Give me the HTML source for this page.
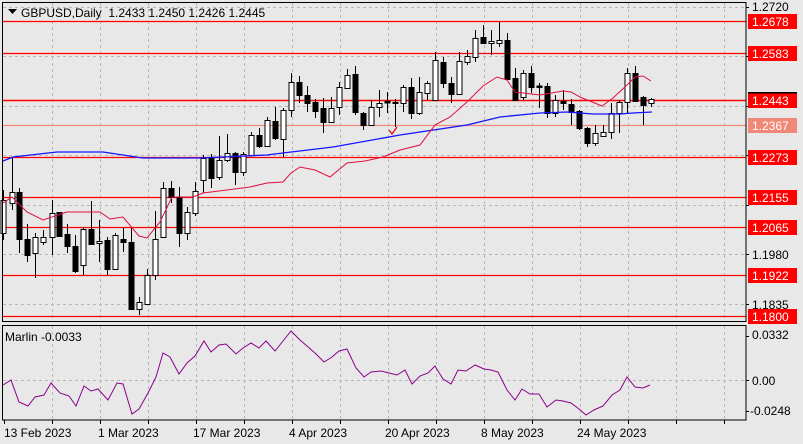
<!DOCTYPE html>
<html><head><meta charset="utf-8"><style>
html,body{margin:0;padding:0;background:#e8e8e8;width:803px;height:444px;overflow:hidden}
svg{display:block;font-family:"Liberation Sans",sans-serif}
</style></head><body>
<svg id="s" width="803" height="444" viewBox="0 0 803 444" xmlns="http://www.w3.org/2000/svg">
<rect x="0" y="0" width="803" height="444" fill="#e8e8e8"/>
<g id="grid" stroke="#b8b8b8" stroke-dasharray="3,3" stroke-width="1"></g>
<g id="hl"></g>
<g id="cand"></g>
<polyline id="blue" fill="none" stroke="#1414ff" stroke-width="1.3"/>
<polyline id="red" fill="none" stroke="#e01040" stroke-width="1"/>
<path d="M389,130 L392,134 L397,127" fill="none" stroke="#e01010" stroke-width="1.3"/>
<polyline id="marlin" fill="none" stroke="#8b008b" stroke-width="1"/>
<rect x="2.5" y="2.5" width="743.5" height="319" fill="none" stroke="#000" stroke-width="1"/>
<rect x="2.5" y="325.5" width="743.5" height="94.5" fill="none" stroke="#000" stroke-width="1"/>
<g font-size="12" fill="#000">
<path d="M8,9 L17,9 L12.5,14 Z" fill="#000"/>
<text x="21" y="17">GBPUSD,Daily&#160; 1.2433 1.2450 1.2426 1.2445</text>
<text x="5" y="341">Marlin -0.0033</text>
</g>
<g font-size="12" fill="#000" id="axis">
<text x="752" y="11">1.2720</text>
<text x="752" y="259">1.1980</text>
<text x="752" y="309">1.1835</text>
<text x="752" y="339">0.0332</text>
<text x="752" y="385">0.00</text>
<text x="750" y="415">-0.0248</text>
</g>
<g id="lbl" font-size="12" fill="#fff"></g>
<g font-size="12" fill="#000">
<text x="4" y="437">13 Feb 2023</text>
<text x="98" y="437">1 Mar 2023</text>
<text x="193" y="437">17 Mar 2023</text>
<text x="289" y="437">4 Apr 2023</text>
<text x="385" y="437">20 Apr 2023</text>
<text x="481" y="437">8 May 2023</text>
<text x="577" y="437">24 May 2023</text>
</g>
</svg>
<script>
var NS="http://www.w3.org/2000/svg";
function el(p,t,a){var e=document.createElementNS(NS,t);for(var k in a)e.setAttribute(k,a[k]);p.appendChild(e);return e;}
var g=document.getElementById('grid');
for(var x=52;x<746;x+=48){el(g,'line',{x1:x+.5,y1:3,x2:x+.5,y2:321});el(g,'line',{x1:x+.5,y1:326,x2:x+.5,y2:419});}
[7,56,106,155,205,254,304].forEach(function(y){el(g,'line',{x1:3,y1:y+.5,x2:745,y2:y+.5});});
el(g,'line',{x1:3,y1:380.5,x2:745,y2:380.5});
var ax=document.getElementById('axis');
[7,56,106,155,205,254,304,336,380,411].forEach(function(y){el(ax,'line',{x1:746,y1:y+.5,x2:749,y2:y+.5,stroke:'#000'});});
[4,52,100,148,196,244,292,340,388,436,484,532,580,628,676,724].forEach(function(x){el(ax,'line',{x1:x+.5,y1:420,x2:x+.5,y2:424,stroke:'#000'});});
var hl=document.getElementById('hl'),lb=document.getElementById('lbl');
[[21,'1.2678','#f00'],[53,'1.2583','#f00'],[100,'1.2443','#f00'],[125,'1.2367','#f08878'],[157,'1.2273','#f00'],[197,'1.2155','#f00'],[227,'1.2065','#f00'],[275,'1.1922','#f00'],[316,'1.1800','#f00']].forEach(function(r){
el(hl,'line',{x1:3,y1:r[0]+.5,x2:746,y2:r[0]+.5,stroke:r[2],'stroke-width':r[0]==100?1.6:1.2});
el(lb,'rect',{x:748,y:r[0]-7,width:49,height:15,fill:r[2]});
var t=el(lb,'text',{x:752,y:r[0]+5});t.textContent=r[1];});
el(lb,'rect',{x:748,y:92,width:49,height:1.5,fill:'#000'});
var C=[[3,190,240,200,233,1],[11.7,158,210,192,203,1],[19.3,188,253,192,239,0],[27.3,224,262,239,255,0],[35.3,233,278,237,253,1],[43.3,230,245,237,242,1],[51.7,200,255,213,237,1],[59.3,212,237,212,236,0],[67.3,224,253,234,246,0],[75.3,235,273,246,271,0],[83.3,227,275,229,265,1],[91.3,201,245,229,244,0],[99.3,220,262,241,243,1],[107.3,237,275,240,269,0],[115.3,233,269,235,269,1],[123.3,228,252,239,242,0],[131.3,228,310,242,309,0],[139.3,297,315,302,309,1],[147.3,269,304,275,304,1],[155.3,211,280,239,275,1],[163.3,182,237,188,237,1],[171.3,181,203,188,197,0],[179.3,187,247,197,233,0],[187.3,207,240,212,233,1],[195.3,182,216,191,213,1],
[203,155,193,158,180,1],[211,154,188,158,178,0],[219,136,180,160,177,1],[227,134,162,153,160,1],[235,152,185,153,172,0],[243,152,176,154,172,1],[251,132,155,135,155,1],[259,128,148,135,146,0],[267,117,147,120,146,1],[275,107,140,121,138,0],[283,108,157,110,139,1],[291,73,117,82,110,1],[299,76,103,82,95,0],[307,86,112,95,103,0],[315,99,118,102,111,0],[323,98,133,108,122,0],[331,97,123,108,122,1],[339,82,115,87,107,1],[347,69,88,75,88,1],[355,66,115,74,112,0],[363,112,130,113,125,0],[371,100,125,107,125,1],[379,90,117,103,107,1],[387,92,113,101,102.5,0],[395,99,127,102,103,0],
[403,85,112,87,103,1],[411,78,119,87,113,0],[419,77,115,92,113,1],[427,81,100,83,93,1],[435,52,100,60,100,1],[443,57,88,62,83,0],[451,77,103,83,94,0],[459,52,94,61,94,1],[467,50,65,56,62,1],[475,30,62,38,57,1],[483,25,44,37,43,0],[491,30,55,41,43,1],[499,22,47,40,43,1],[507,33,80,40,79,0],[515,68,100,78,100,0],[523,70,100,73,97,1],[531,66,93,73,87,0],[539,83,108,85.5,87,0],[547,83,118,86,113,0],[555,95,117,100,113,1],[563,90,110,101,103,0],[571,99,125,104,112,0],[579,110,130,111,128,0],[587,127,147,128,143,0],[595,125,146,133,143,1],[603,125,137,132,136,1],[611,103,139,113,132,1],[619,100,133,102,113,1],[627,68,113,73,102,1],[635,66,102,73,101,0],[643,96,125,97,105,0],[651,98,107,99,103,1]];
var cg=document.getElementById('cand');
C.forEach(function(c){var x=Math.round(c[0]);
el(cg,'line',{x1:x+.5,y1:c[1],x2:x+.5,y2:c[2],stroke:'#000'});
el(cg,'rect',{x:x-2,y:c[3]+.5,width:5,height:Math.max(1,c[4]-c[3]),fill:c[5]?'#fff':'#000',stroke:'#000','stroke-width':1});});
document.getElementById('blue').setAttribute('points',"3,161 13,157 57,152 103,152 143,158 200,158 267,155 283,153 333,147 400,135 467,125 500,117 540,113 567,112 593,114 620,114 633,113 652,112");
document.getElementById('red').setAttribute('points',"3,203 12,197 27,212 43,220 67,212 100,212 110,219 123,217 139,236 147,238 160,222 172,197 193,197 203,193 227,190 250,187 267,183 283,182 291,173 300,167 315,170 330,177 347,163 365,161 383,157 400,150 420,145 435,125 450,117 467,102 483,86 497,77 507,80 515,92 540,95 563,91 571,92 580,97 602,106 613,98 627,85 635,77 643,76 651,81");
document.getElementById('marlin').setAttribute('points',"3,385 11,380 19,402 28,406 35,397 44,395 51,383 60,393 69,396 76,406 84,386 91,391 98,389 108,400 117,383 123,384 132,414 139,409 148,393 156,377 163,353 170,357 179,374 187,363 195,356 204,341 211,352 219,345 226,344 236,354 243,348 251,343 259,348 266,341 275,351 283,341 291,331 300,340 307,346 315,353 324,362 332,357 339,351 347,349 356,368 364,377 371,372 381,371 389,373 397,375 405,370 412,384 420,376 428,373 435,366 443,379 451,384 458,370 466,371 475,365 484,369 491,370 498,372 507,390 515,400 522,389 530,394 539,394 547,407 556,400 563,401 571,403 579,409 586,415 594,410 603,406 612,395 620,390 627,377 635,387 643,388 650,385");
</script>
</body></html>
